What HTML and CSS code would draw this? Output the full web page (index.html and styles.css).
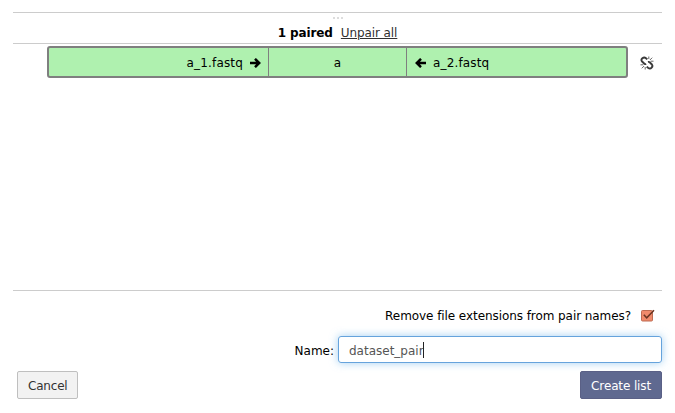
FILE: index.html
```html
<!DOCTYPE html>
<html lang="en">
<head>
<meta charset="utf-8">
<title>Create a list of dataset pairs</title>
<link rel="stylesheet" href="styles.css">
</head>
<body>
<main class="creator">
  <header class="paired-header">
    <div class="drag-handle"><i></i><i></i><i></i></div>
    <div class="paired-title"><strong>1 paired</strong><a class="unpair-all">Unpair all</a></div>
  </header>
  <section class="paired-list">
    <div class="pair-row">
      <div class="pair">
        <span class="forward">a_1.fastq
          <svg class="arrow" viewBox="0 0 11 10"><path d="M0 5h9M5 .8 9.2 5 5 9.2"/></svg>
        </span>
        <span class="pair-name">a</span>
        <span class="reverse">
          <svg class="arrow" viewBox="0 0 11 10"><path d="M11 5H2M6 .8 1.8 5 6 9.2"/></svg>
          a_2.fastq</span>
      </div>
      <svg class="unlink" viewBox="0 0 14 14">
        <path class="chain" d="M7.3 3.4 6 2.2Q4.2.8 2.4 2.3T2.1 5.5L4.4 7.7Q5.2 8.3 6.2 8M8 6Q9 5.7 9.7 6.3L11.9 8.5Q13.1 10 11.6 11.7T8 11.8L6.7 10.6"/>
        <path class="sparks" d="M8.8 3V.5M9.9 4l2.3-2.3M10.7 5.2h2.8M.5 8.8h2.8M4.1 10l-2.3 2.3M5.2 11v2.5"/>
      </svg>
    </div>
  </section>
  <footer class="footer">
    <label class="extensions"><span class="question">Remove file extensions from pair names?</span>
      <svg class="checkbox" viewBox="0 0 14 13">
        <rect x=".5" y="1.5" width="11" height="10.5" rx="1"/>
        <path d="M2.8 5.8 5.7 8.8 13 1.2"/>
      </svg>
    </label>
    <div class="name-row">
      <span class="name-label">Name:</span>
      <div class="name-input"><span class="value">dataset_pair</span><span class="caret"></span></div>
    </div>
    <div class="actions">
      <button class="btn">Cancel</button>
      <button class="btn primary">Create list</button>
    </div>
  </footer>
</main>
</body>
</html>
```

FILE: styles.css
```css
* { box-sizing: border-box; }
body {
  margin: 0;
  background: #fff;
  color: #000;
  font: 12px/18px "DejaVu Sans", sans-serif;
}
.creator {
  display: flex;
  flex-direction: column;
  height: 413px;
  padding: 12px 13px 14px;
}
.paired-header {
  height: 32px;
  border-top: 1px solid #ccc;
  border-bottom: 1px solid #ccc;
}
.drag-handle {
  display: flex;
  justify-content: center;
  gap: 2px;
  height: 11px;
  padding-top: 4px;
}
.drag-handle i { width: 2px; height: 2px; background: #ddd; }
.paired-title { display: flex; justify-content: center; gap: 8px; letter-spacing: -.1px; }
.unpair-all { color: #303030; text-decoration: underline; }
.paired-list { flex: 1; padding: 2px 0 0 34px; }
.pair-row { display: flex; align-items: center; gap: 12px; }
.pair {
  display: grid;
  grid-template-columns: 219px 139px 1fr;
  width: 581px;
  height: 32px;
  border: 2px solid #7f7f7f;
  border-radius: 3px;
  background: #aff1af;
  line-height: 30px;
}
.forward, .reverse { display: flex; align-items: center; gap: 7px; letter-spacing: .16px; }
.forward { justify-content: flex-end; padding-right: 7px; }
.pair-name { text-align: center; border: solid #7f7f7f; border-width: 0 1px; }
.reverse { padding-left: 8px; }
.arrow { width: 11px; height: 10px; margin-top: -1px; fill: none; stroke: #000; stroke-width: 2.5; }
.unlink { width: 14px; height: 14px; fill: none; margin-top: 2px; }
.chain { stroke: #3a3a3a; stroke-width: 1.9; }
.sparks { stroke: #555; stroke-width: .9; }
.footer { height: 109px; border-top: 1px solid #ccc; }
.extensions {
  display: flex;
  align-items: center;
  justify-content: flex-end;
  gap: 10px;
  height: 18px;
  margin: 15px 7px 0 0;
}
.question { padding-top: 1px; letter-spacing: -.07px; }
.checkbox { width: 14px; height: 13px; fill: #f08a6b; stroke: #bd6b52; }
.checkbox path { fill: none; stroke: #6b3522; stroke-width: 1.5; }
.name-row {
  display: flex;
  align-items: center;
  justify-content: flex-end;
  gap: 4px;
  margin-top: 12px;
}
.name-label, .value { padding-top: 2px; }
.name-input {
  display: flex;
  align-items: center;
  width: 324px;
  height: 27px;
  padding: 0 10px;
  border: 1px solid #66a3dc;
  border-radius: 3px;
  box-shadow: 0 0 8px rgba(102, 175, 233, .6);
  color: #555;
}
.caret { width: 1px; height: 16px; margin-left: -1px; background: #222; }
.actions {
  display: flex;
  justify-content: space-between;
  margin-top: 8px;
  padding-left: 4px;
}
.btn {
  height: 28px;
  padding: 1px 10px 0;
  border: 1px solid #bfbfbf;
  border-radius: 2px;
  background: #f2f2f2;
  color: #333;
  font: inherit;
  letter-spacing: -.2px;
}
.primary { border-color: #5a6086; background: #5f6990; color: #fff; letter-spacing: -.13px; }
```
